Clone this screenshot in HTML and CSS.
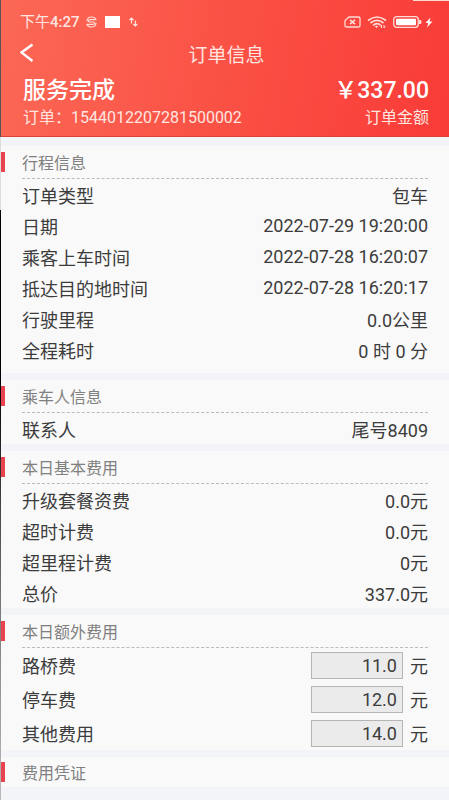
FILE: index.html
```
<!DOCTYPE html>
<html lang="zh-CN">
<head>
  <meta charset="UTF-8" />
  <meta name="viewport" content="width=device-width, initial-scale=1.0"/>
  <title>订单信息</title>
  <link rel="stylesheet" href="styles.css">
</head>
<body>

  <div class="page">
    <header class="header">
      <div class="status-bar">
        <span class="clock">下午<b>4:27</b></span>
        <svg class="icon-s" width="11" height="12" viewBox="0 0 11 12" fill="none" stroke="#ffdcd6" stroke-width="1.2" stroke-linecap="round">
          <path d="M1 4.800C1.300 2.400 3 1 5.500 1S9.600 2.200 9.900 3.600M10 7.200C9.700 9.600 8 11 5.500 11S1.400 9.800 1.100 8.400"/>
          <path d="M9.800 3.600H4C1.800 3.600 1.800 6 4 6H7C9.200 6 9.200 8.400 7 8.400H1.200"/>
        </svg>
        <span class="block"></span>
        <svg width="9" height="10" viewBox="0 0 9 10" fill="none" stroke="#ffe5e0" stroke-width="1.2">
          <path d="M2.500 6.500V1M0.500 3L2.500 1L4.500 3M6.300 3.500V9M4.300 7L6.300 9L8.300 7"/>
        </svg>
        <div class="status-right">
          <svg width="17" height="12" viewBox="0 0 17 12" fill="none" stroke="#ffdcd6" stroke-width="1.3">
            <path d="M5 1H14.500Q16 1 16 2.500V9.500Q16 11 14.500 11H2.500Q1 11 1 9.500V4.500Z"/>
            <path d="M6 3.800L11 8.200M11 3.800L6 8.200" stroke-width="1.6"/>
          </svg>
          <svg width="20" height="13" viewBox="0 0 20 13" fill="none" stroke="#ffdcd6" stroke-width="1.700">
            <path d="M1 4.500Q10 -2.500 19 4.500M3.500 7Q10 1.800 16.500 7M6 9.300Q10 6 13.500 9"/>
            <path d="M7.800 10.500Q9.500 9 11.200 10.500L9.500 12Z" fill="#ffdcd6" stroke="none"/>
            <path d="M14.500 12V9M13.200 10.500L14.500 9M17 9V12M18.300 10.500L17 12" stroke-width="1"/>
          </svg>
          <svg width="29" height="12" viewBox="0 0 29 12">
            <rect x="0.700" y="0.700" width="24.600" height="10.600" rx="3" fill="none" stroke="#ffdcd6" stroke-width="1.300"/>
            <rect x="3" y="2.800" width="20" height="6.400" rx="1" fill="#fff"/>
            <path d="M26 4H27.500Q28.500 4 28.500 6T27.500 8H26Z" fill="#ffdcd6"/>
          </svg>
          <svg width="8" height="11" viewBox="0 0 8 11" fill="#fff">
            <path d="M5.500 0.500L0.500 6H3.300L2 10.500L7.500 4.600H4.600Z"/>
          </svg>
        </div>
      </div>

      <nav class="nav">
        <button class="back" type="button" aria-label="返回">
          <svg width="14" height="20" viewBox="0 0 14 20" fill="none" stroke="#fff" stroke-width="2.400">
            <path d="M12.500 1.500L1.500 9.500L12.500 18"/>
          </svg>
        </button>
        <h1>订单信息</h1>
      </nav>

      <div class="summary">
        <strong>服务完成</strong>
        <strong>￥337.00</strong>
      </div>
      <div class="summary-sub">
        <span>订单：1544012207281500002</span>
        <span>订单金额</span>
      </div>
    </header>

    <section class="card trip">
      <h2>行程信息</h2>
      <dl>
        <div class="row"><dt>订单类型</dt><dd>包车</dd></div>
        <div class="row"><dt>日期</dt><dd>2022-07-29 19:20:00</dd></div>
        <div class="row"><dt>乘客上车时间</dt><dd>2022-07-28 16:20:07</dd></div>
        <div class="row"><dt>抵达目的地时间</dt><dd>2022-07-28 16:20:17</dd></div>
        <div class="row"><dt>行驶里程</dt><dd>0.0公里</dd></div>
        <div class="row"><dt>全程耗时</dt><dd>0 时 0 分</dd></div>
      </dl>
    </section>

    <section class="card">
      <h2>乘车人信息</h2>
      <dl>
        <div class="row"><dt>联系人</dt><dd>尾号8409</dd></div>
      </dl>
    </section>

    <section class="card">
      <h2>本日基本费用</h2>
      <dl>
        <div class="row"><dt>升级套餐资费</dt><dd>0.0元</dd></div>
        <div class="row"><dt>超时计费</dt><dd>0.0元</dd></div>
        <div class="row"><dt>超里程计费</dt><dd>0元</dd></div>
        <div class="row"><dt>总价</dt><dd>337.0元</dd></div>
      </dl>
    </section>

    <section class="card">
      <h2>本日额外费用</h2>
      <form>
        <div class="row fee">
          <label for="toll">路桥费</label>
          <input type="text" id="toll" value="11.0">
          <span>元</span>
        </div>
        <div class="row fee">
          <label for="parking">停车费</label>
          <input type="text" id="parking" value="12.0">
          <span>元</span>
        </div>
        <div class="row fee">
          <label for="other">其他费用</label>
          <input type="text" id="other" value="14.0">
          <span>元</span>
        </div>
      </form>
    </section>

    <section class="card voucher">
      <h2>费用凭证</h2>
    </section>
  </div>

</body>
</html>
```

FILE: styles.css
```
* {
  box-sizing: border-box;
}

body {
  margin: 0;
  background: #f3f4f8;
  color: #3c3c3c;
  font-family: Roboto, "Noto Sans CJK SC", sans-serif;
  font-size: 18px;
}

/* thin dark edge down the left side */
.page {
  min-height: 100vh;
  padding-left: 1px;
  background: linear-gradient(#555 0 137px, #ddd 137px 210px, #000 210px 380px, #777 600px, #bbb) left / 1px 100% no-repeat;
}

.header {
  padding: 13px 20px 6px 19px;
  background:
    linear-gradient(#fbd9d3, #fbd9d3) top right / 36px 1px no-repeat,
    linear-gradient(100deg, #fb6856, #fa5145 50%, #f93b37);
  border-bottom: 1px solid #e04038;
  color: #fff;
}

.status-bar {
  display: flex;
  align-items: center;
  height: 18px;
  margin-right: -4px;
  color: #ffe5e0;
}

.clock {
  margin-right: 6px;
  font-size: 15px;
  line-height: 18px;
}

.clock b {
  font-weight: 500;
}

.block {
  width: 15px;
  height: 12px;
  margin: 0 9px 0 8px;
  background: #fff;
}

.status-right {
  display: flex;
  align-items: center;
  gap: 6px;
  margin-left: auto;
}

.status-right svg:last-child {
  margin-left: -3px;
}

.nav {
  display: grid;
  grid-template-columns: 20px 1fr 16px;
  align-items: center;
  height: 44px;
}

.back {
  display: flex;
  padding: 0;
  background: none;
  border: none;
  cursor: pointer;
}

h1 {
  margin: 0;
  color: #ffe5e0;
  font-size: 19px;
  font-weight: 400;
  text-align: center;
}

.summary,
.summary-sub {
  display: flex;
  justify-content: space-between;
  padding-left: 3px;
}

.summary strong {
  font-size: 23px;
  font-weight: 500;
  line-height: 31px;
}

.summary-sub {
  color: #ffe5e0;
  font-size: 16px;
  line-height: 24px;
}

.card {
  margin-bottom: 7px;
  padding: 0 21px;
  background: #f9f9f9;
}

.trip {
  margin-top: 9px;
  padding-bottom: 8px;
}

h2 {
  display: flex;
  align-items: center;
  height: 33px;
  margin: 0;
  border-bottom: 1px dashed #bbb;
  color: #808080;
  font-size: 16px;
  font-weight: 400;
}

h2::before {
  content: "";
  width: 4px;
  height: 20px;
  margin: 0 17px 0 -21px;
  background: #e8434f;
}

dl,
dd {
  margin: 0;
}

.row {
  display: flex;
  align-items: center;
  justify-content: space-between;
  height: 31px;
}

.fee {
  height: 34px;
}

.fee label {
  flex: 1;
}

.fee input {
  width: 92px;
  height: 27px;
  margin-right: 7px;
  padding: 0 5px;
  background: #ebebeb;
  border: 1px solid #b5b5b5;
  border-radius: 0;
  color: #3c3c3c;
  font: inherit;
  text-align: right;
}

.voucher {
  margin-bottom: 0;
}

.voucher h2 {
  height: 30px;
  border-bottom: none;
}
```
